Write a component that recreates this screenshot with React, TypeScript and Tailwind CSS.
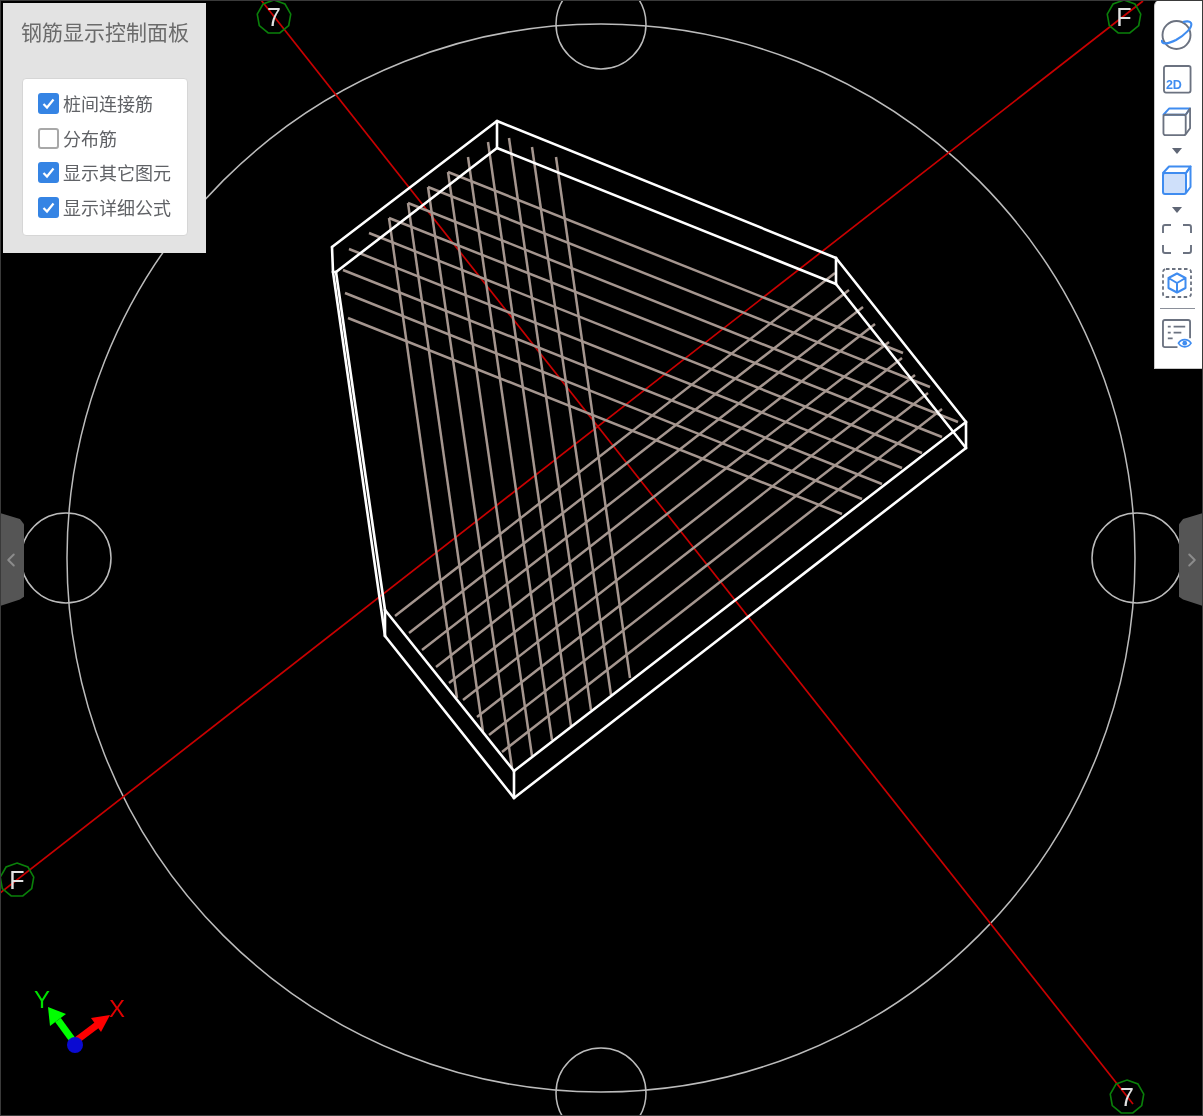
import { ChevronLeft, ChevronRight } from "lucide-react";

type Seg = [number, number, number, number];

// rebars, read off the picture as end points
const rebarA: Seg[] = [
  [448, 172, 903, 353],
  [428, 187, 930, 387],
  [408, 203, 958, 422],
  [389, 218, 942, 437],
  [369, 233, 922, 453],
  [349, 249, 902, 468],
  [343, 270, 882, 484],
  [345, 293, 862, 499],
  [348, 318, 842, 514],
];
const rebarB: Seg[] = [
  [556, 157, 630, 678],
  [532, 147, 611, 695],
  [509, 138, 591, 710],
  [488, 142, 571, 726],
  [468, 157, 552, 740],
  [448, 172, 532, 756],
  [428, 187, 512, 768],
  [408, 203, 483, 732],
  [389, 218, 457, 698],
];
const rebarC: Seg[] = [
  [395, 616, 835, 273],
  [409, 633, 849, 290],
  [422, 650, 863, 307],
  [436, 667, 875, 324],
  [449, 683, 889, 342],
  [463, 700, 902, 358],
  [477, 717, 915, 375],
  [489, 735, 928, 393],
  [502, 752, 942, 409],
];

const boxEdges: Seg[] = [
  [497, 121, 332, 247],
  [497, 121, 836, 258],
  [836, 258, 966, 422],
  [966, 422, 514, 771],
  [514, 771, 385, 610],
  [385, 610, 336, 272],
  [336, 272, 497, 148],
  [497, 148, 836, 284],
  [836, 284, 966, 448],
  [966, 448, 514, 798],
  [514, 798, 385, 636],
  [385, 636, 333, 272],
  [497, 121, 497, 148],
  [836, 258, 836, 284],
  [966, 422, 966, 448],
  [514, 771, 514, 798],
  [332, 247, 333, 272],
  [333, 272, 336, 272],
  [385, 610, 385, 636],
];

const axisMarks = [
  { x: 274, y: 17, label: "7" },
  { x: 1124, y: 17, label: "F" },
  { x: 17, y: 880, label: "F" },
  { x: 1127, y: 1097, label: "7" },
];

const octagon = (cx: number, cy: number, r: number) =>
  Array.from({ length: 9 }, (_, i) => {
    const a = (i / 9) * Math.PI * 2 - Math.PI / 2;
    return `${cx + r * Math.cos(a)},${cy + r * Math.sin(a)}`;
  }).join(" ");

const options = [
  { label: "桩间连接筋", checked: true },
  { label: "分布筋", checked: false },
  { label: "显示其它图元", checked: true },
  { label: "显示详细公式", checked: true },
];

const Scene = () => (
  <svg
    className="absolute inset-0"
    width={1203}
    height={1116}
    viewBox="0 0 1203 1116"
  >
    <g stroke="#bcbcbc" strokeWidth={1.5} fill="none">
      <circle cx={601} cy={558} r={534} />
      <circle cx={601} cy={24} r={45} />
      <circle cx={601} cy={1093} r={45} />
      <circle cx={66} cy={558} r={45} />
      <circle cx={1137} cy={558} r={45} />
    </g>
    <g stroke="#c80000" strokeWidth={1.7}>
      <line x1={261} y1={0} x2={1133} y2={1104} />
      <line x1={1143} y1={1} x2={0} y2={893} />
    </g>
    <g stroke="#a5968f" strokeWidth={2.5}>
      {[...rebarA, ...rebarB, ...rebarC].map(([x1, y1, x2, y2], i) => (
        <line key={i} x1={x1} y1={y1} x2={x2} y2={y2} />
      ))}
    </g>
    <g stroke="#ffffff" strokeWidth={2.6} strokeLinecap="round">
      {boxEdges.map(([x1, y1, x2, y2], i) => (
        <line key={i} x1={x1} y1={y1} x2={x2} y2={y2} />
      ))}
    </g>
    {axisMarks.map((m) => (
      <g key={`${m.label}-${m.x}`}>
        <polygon
          points={octagon(m.x, m.y, 17)}
          fill="none"
          stroke="#0a800a"
          strokeWidth={1.6}
        />
        <text
          x={m.x}
          y={m.y + 9}
          textAnchor="middle"
          fill="#e2e2e2"
          fontSize={25}
          fontFamily="'Liberation Sans', sans-serif"
        >
          {m.label}
        </text>
      </g>
    ))}
    {/* axis triad */}
    <g>
      <line x1={74} y1={1042} x2={58} y2={1020} stroke="#00ff00" strokeWidth={7} />
      <polygon points="48,1007 66,1014 50,1026" fill="#00ff00" />
      <line x1={77} y1={1040} x2={97} y2={1025} stroke="#ff0000" strokeWidth={7} />
      <polygon points="110,1015 101,1032 91,1018" fill="#ff0000" />
      <circle cx={75} cy={1045} r={8} fill="#0a0ad2" />
      <text x={42} y={1008} textAnchor="middle" fill="#00e000" fontSize={24} fontFamily="'Liberation Sans', sans-serif">
        Y
      </text>
      <text x={117} y={1017} textAnchor="middle" fill="#e00000" fontSize={24} fontFamily="'Liberation Sans', sans-serif">
        X
      </text>
    </g>
  </svg>
);

const Checkbox = ({ checked }: { checked: boolean }) =>
  checked ? (
    <span className="flex h-[21px] w-[21px] items-center justify-center rounded-[3px] bg-[#3584e4]">
      <svg width="15" height="15" viewBox="0 0 15 15" fill="none">
        <path d="M2.5 8 L6 11.5 L12.5 3.5" stroke="#fff" strokeWidth="2.2" />
      </svg>
    </span>
  ) : (
    <span className="h-[21px] w-[21px] rounded-[3px] border-2 border-[#a8a8a8] bg-white" />
  );

const Panel = () => (
  <div className="absolute left-[3px] top-[3px] flex h-[250px] w-[203px] flex-col bg-[#e3e3e3] px-[19px] font-['Liberation_Sans','Noto_Sans_CJK_SC',sans-serif]">
    <h1 className="-ml-px mt-[16px] h-[59px] whitespace-nowrap text-[21px] leading-[28px] font-normal text-[#6b6b6b]">
      钢筋显示控制面板
    </h1>
    <div className="flex h-[158px] w-[166px] flex-col rounded-[4px] border border-[#d6d6d6] bg-white pl-[15px] pt-[14px]">
      {options.map((o) => (
        <div key={o.label} className="flex h-[34.5px] items-start gap-[4px]">
          <Checkbox checked={o.checked} />
          <span className="whitespace-nowrap text-[18px] leading-[24px] text-[#606266]">
            {o.label}
          </span>
        </div>
      ))}
    </div>
  </div>
);

const Caret = ({ className }: { className: string }) => (
  <svg className={className} width="10" height="6" viewBox="0 0 10 6">
    <path d="M0 0 H10 L5 6 Z" fill="#5f6675" />
  </svg>
);

const Toolbar = () => (
  <div className="absolute right-0 top-0 flex h-[369px] w-[49px] flex-col items-center rounded-tl-[6px] border-b border-l border-r border-[#c8c8c8] bg-white pr-[3px] pt-[20px]">
    <svg width="32" height="30" viewBox="0 0 32 30" fill="none">
      <circle cx="15.5" cy="15" r="14" stroke="#6b7280" strokeWidth="1.9" />
      <path
        d="M1 20 C0 25 7 24 15 20 C24 15 32 7 30 3 C29 1 25 1 22 2"
        stroke="#3f8cf0"
        strokeWidth="2.1"
      />
    </svg>
    <svg className="mt-[15px]" width="29" height="29" viewBox="0 0 30 30" fill="none">
      <rect x="1" y="1" width="27.5" height="27.5" rx="2" stroke="#6b7280" strokeWidth="1.9" />
      <text x="3" y="25" fontSize="13" fontWeight="700" fill="#3f8cf0" fontFamily="'Liberation Sans', sans-serif">
        2D
      </text>
    </svg>
    <svg className="mt-[13px]" width="30" height="30" viewBox="0 0 30 31" fill="none">
      <path d="M1 8 L7 1.5 H28.5 L24 8 Z" stroke="#3f8cf0" strokeWidth="2" strokeLinejoin="round" />
      <path d="M24 8 L28.5 1.5 V22 L24 28" stroke="#6b7280" strokeWidth="1.9" strokeLinejoin="round" />
      <rect x="1" y="8" width="23" height="21" rx="2" stroke="#6b7280" strokeWidth="1.9" />
    </svg>
    <Caret className="mt-[11px]" />
    <svg className="mt-[11px]" width="30" height="31" viewBox="0 0 30 31" fill="none">
      <path d="M1 8 L7 1.5 H28.5 L24 8 Z" stroke="#3f8cf0" strokeWidth="2" strokeLinejoin="round" />
      <path d="M24 8 L28.5 1.5 V22 L24 28" stroke="#3f8cf0" strokeWidth="2" strokeLinejoin="round" />
      <rect x="1" y="8" width="23" height="21" rx="2" fill="#cfe0fa" stroke="#3f8cf0" strokeWidth="2" />
    </svg>
    <Caret className="mt-[11px]" />
    <svg className="mt-[11px]" width="30" height="30" viewBox="0 0 30 30" fill="none" stroke="#6b7280" strokeWidth="1.9">
      <path d="M9 1 H3 Q1 1 1 3 V9" />
      <path d="M21 1 H27 Q29 1 29 3 V9" />
      <path d="M1 21 V27 Q1 29 3 29 H9" />
      <path d="M29 21 V27 Q29 29 27 29 H21" />
    </svg>
    <svg className="mt-[14px]" width="30" height="30" viewBox="0 0 30 30" fill="none">
      <rect x="1" y="1" width="28" height="28" rx="3" stroke="#6b7280" strokeWidth="1.8" strokeDasharray="3.5 2.5" />
      <path d="M15 5.5 L23.5 10 V20 L15 24.5 L6.5 20 V10 Z M6.5 10 L15 15 L23.5 10 M15 15 V24.5" stroke="#3f8cf0" strokeWidth="2" strokeLinejoin="round" />
    </svg>
    <div className="mt-[10px] h-px w-[35px] bg-[#8a8f99]" />
    <svg className="mt-[10px]" width="30" height="30" viewBox="0 0 31 31" fill="none">
      <path d="M16 29 H3 Q1 29 1 27 V3 Q1 1 3 1 H27 Q29 1 29 3 V20" stroke="#6b7280" strokeWidth="1.9" />
      <path d="M6 8 H9 M12 8 H24 M6 14 H9 M12 14 H20 M6 20 H11" stroke="#6b7280" strokeWidth="1.8" />
      <path d="M17 25 C20 20 27 20 30 25 C27 30 20 30 17 25 Z" fill="#fff" stroke="#3f8cf0" strokeWidth="1.7" />
      <circle cx="23.5" cy="25" r="2.4" fill="#3f8cf0" />
    </svg>
  </div>
);

const App = () => {
  return (
    <div className="relative h-[1116px] w-full overflow-hidden bg-black blur-[0.4px]">
      <Scene />
      <Panel />
      <Toolbar />
      <div className="absolute left-0 top-[513px] flex h-[93px] w-[24px] items-center justify-center bg-[#555555] [clip-path:polygon(0_0,83%_6.5%,100%_12%,100%_90%,83%_93%,0_100%)]">
        <ChevronLeft size={22} strokeWidth={2.2} className="mr-[2px] text-[#8c8c8c]" />
      </div>
      <div className="absolute right-0 top-[513px] flex h-[93px] w-[24px] items-center justify-center bg-[#555555] [clip-path:polygon(100%_0,17%_6.5%,0_12%,0_90%,17%_93%,100%_100%)]">
        <ChevronRight size={22} strokeWidth={2.2} className="ml-[1px] text-[#8c8c8c]" />
      </div>
      <div className="pointer-events-none absolute inset-0 border border-[#3a3a3a]" />
    </div>
  );
};

export default App;
